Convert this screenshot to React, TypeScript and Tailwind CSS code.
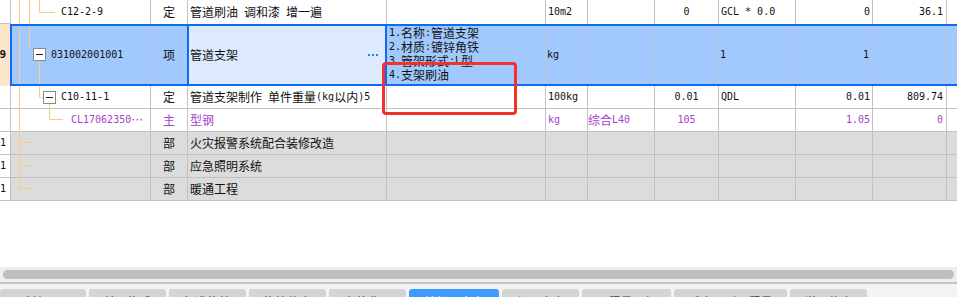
import React from 'react';

const CJK = /([\u2026\u3000-\u303f\u4e00-\u9fff\uff00-\uffef]+)/;

// SimSun-like look: full-width CJK at 12px, half-width latin at 6px per char
const T: React.FC<{ s: string }> = ({ s }) => {
  const parts = s.split(CJK).filter(Boolean);
  return (
    <>
      {parts.map((p, i) =>
        CJK.test(p) ? (
          <span key={i} className="font-['Noto_Sans_CJK_SC',sans-serif] text-[12px] leading-[14px]">
            {p}
          </span>
        ) : (
          <span key={i} className="font-['DejaVu_Sans_Mono',monospace] text-[10px] leading-[14px] whitespace-pre">
            {p}
          </span>
        )
      )}
    </>
  );
};

const grid = 'border-r border-[#c2c2c2]';
const purple = 'text-[#a741c9]';

interface RowData {
  no?: string;
  code: string;
  codePad: string;
  type: string;
  name: string;
  feature?: string;
  unit?: string;
  expr?: string;
  qty?: string;
  formula?: string;
  amount?: string;
  price?: string;
  gray?: boolean;
  main?: boolean;
}

const Row: React.FC<{ r: RowData; h: string }> = ({ r, h }) => {
  const bg = r.gray ? 'bg-[#dcdcdc]' : 'bg-white';
  const tc = r.main ? purple : 'text-[#111]';
  return (
    <div className={`flex ${h} ${tc} leading-[14px]`}>
      <div className={`w-[11px] ${grid} bg-white flex items-center justify-end pr-[4px] overflow-hidden border-b border-b-[#c2c2c2]`}>
        {r.no && <T s={r.no} />}
      </div>
      <div className={`flex flex-1 ${bg} ${h === 'h-[24px]' ? '' : 'border-b border-[#c2c2c2]'}`}>
        <div className={`w-[140px] ${grid} flex items-center ${r.codePad} whitespace-nowrap`}>
          <T s={r.code} />
        </div>
        <div className={`w-[37px] ${grid} flex items-center justify-center`}>
          <T s={r.type} />
        </div>
        <div className={`w-[199px] ${grid} flex items-center pl-[2px] whitespace-nowrap`}>
          <T s={r.name} />
        </div>
        <div className={`w-[159px] ${grid} flex items-center pl-[2px]`}>
          {r.feature && <T s={r.feature} />}
        </div>
        <div className={`w-[42px] ${grid} flex items-center pl-[2px]`}>
          {r.unit && <T s={r.unit} />}
        </div>
        <div className={`w-[67px] ${grid} flex items-center whitespace-nowrap`}>
          {r.expr && <T s={r.expr} />}
        </div>
        <div className={`w-[64px] ${grid} flex items-center justify-center`}>
          {r.qty && <T s={r.qty} />}
        </div>
        <div className={`w-[77px] ${grid} flex items-center pl-[2px] whitespace-nowrap`}>
          {r.formula && <T s={r.formula} />}
        </div>
        <div className={`w-[77px] ${grid} flex items-center justify-end pr-[2px]`}>
          {r.amount && <T s={r.amount} />}
        </div>
        <div className={`w-[74px] ${grid} flex items-center justify-end pr-[3px]`}>
          {r.price && <T s={r.price} />}
        </div>
        <div className="flex-1" />
      </div>
    </div>
  );
};

const selGrid = 'border-r border-[#b9c6da]';

const features = ['1.名称:管道支架', '2.材质:镀锌角铁', '3.管架形式:L型', '4.支架刷油'];

const SelectedRow: React.FC = () => (
  <div className="flex h-[62px] text-[#111] leading-[14px]">
    <div className="w-[10px] bg-[#fde5c8] flex items-center justify-end pr-[4px] overflow-hidden font-bold">
      <span className="font-['DejaVu_Sans_Mono',monospace] text-[11px] font-bold">9</span>
    </div>
    <div className="flex flex-1 border-y-2 border-l-2 border-[#0d6cf2] bg-[#a1c9fd]">
      <div className={`w-[139px] ${selGrid} flex items-center pl-[39px]`}>
        <T s="031002001001" />
      </div>
      <div className="w-[36px] flex items-center justify-center">
        <T s="项" />
      </div>
      <div className="w-[200px] border-x-2 border-[#0d6cf2] bg-[#dde9fd] flex items-center justify-between pl-[1px] pr-[6px]">
        <T s="管道支架" />
        <svg width="11" height="3" viewBox="0 0 11 3" className="mt-[1px]">
          <rect x="0" y="0" width="2" height="2" fill="#3a7bd5" />
          <rect x="4" y="0" width="2" height="2" fill="#3a7bd5" />
          <rect x="8" y="0" width="2" height="2" fill="#3a7bd5" />
        </svg>
      </div>
      <div className={`w-[158px] ${selGrid} pl-[2px] flex flex-col`}>
        {features.map((f) => (
          <div key={f} className="h-[14px] shrink-0 flex items-center whitespace-nowrap">
            <T s={f} />
          </div>
        ))}
      </div>
      <div className={`w-[42px] ${selGrid} flex items-center pl-[2px]`}>
        <T s="kg" />
      </div>
      <div className={`w-[67px] ${selGrid}`} />
      <div className={`w-[64px] ${selGrid}`} />
      <div className={`w-[77px] ${selGrid} flex items-center pl-[2px]`}>
        <T s="1" />
      </div>
      <div className={`w-[77px] ${selGrid} flex items-center justify-end pr-[2px]`}>
        <T s="1" />
      </div>
      <div className={`w-[74px] ${selGrid}`} />
      <div className="flex-1" />
    </div>
  </div>
);

const TreeLines: React.FC = () => {
  const c = '#fcc98a';
  return (
    <svg className="absolute top-0 left-0 pointer-events-none" width="160" height="201">
      <g stroke={c} strokeWidth="1" fill="none">
        <path d="M19.5 0V23.5M19.5 26.5V83.5M19.5 86.5V188.5" />
        <path d="M19.5 142.5H36M19.5 165.5H36M19.5 188.5H36" />
        <path d="M29.5 0V23.5M29.5 26.5V48" />
        <path d="M39.5 0V12.5H55" />
        <path d="M39.5 61V83.5M39.5 86.5V97.5H43.5" />
        <path d="M49.5 103.5V119.5H63" />
      </g>
      <rect x="33.5" y="48.5" width="12" height="12" fill="#fff" stroke="#8a8a8a" />
      <path d="M36 54.5H43" stroke="#222" strokeWidth="1" />
      <rect x="43.5" y="91.5" width="12" height="12" fill="#fff" stroke="#8a8a8a" />
      <path d="M46 97.5H53" stroke="#222" strokeWidth="1" />
    </svg>
  );
};

const tabs: { label: string; w: string; active?: boolean }[] = [
  { label: '工料机显示', w: 'w-[86px]' },
  { label: '单价构成', w: 'w-[77px]' },
  { label: '标准换算', w: 'w-[77px]' },
  { label: '换算信息', w: 'w-[77px]' },
  { label: '安装费用', w: 'w-[77px]' },
  { label: '特征及内容', w: 'w-[90px]', active: true },
  { label: '组价方案', w: 'w-[77px]' },
  { label: '工程量明细', w: 'w-[89px]' },
  { label: '反查图形工程量', w: 'w-[113px]' },
  { label: '说明信息', w: 'w-[77px]' },
];

export default function App() {
  const rows: RowData[] = [
    { code: 'C10-11-1', codePad: 'pl-[50px]', type: '定', name: '管道支架制作 单件重量(kg以内)5', unit: '100kg', qty: '0.01', formula: 'QDL', amount: '0.01', price: '809.74' },
    { code: 'CL17062350…', codePad: 'pl-[60px]', type: '主', name: '型钢', unit: 'kg', expr: '综合L40', qty: '105', amount: '1.05', price: '0', main: true },
    { no: '1', code: '', codePad: '', type: '部', name: '火灾报警系统配合装修改造', gray: true },
    { no: '1', code: '', codePad: '', type: '部', name: '应急照明系统', gray: true },
    { no: '1', code: '', codePad: '', type: '部', name: '暖通工程', gray: true },
  ];

  return (
    <div className="relative w-[957px] h-[297px] overflow-hidden bg-white flex flex-col">
      <div className="relative">
        <Row
          h="h-[24px]"
          r={{ code: 'C12-2-9', codePad: 'pl-[50px]', type: '定', name: '管道刷油 调和漆 增一遍', unit: '10m2', qty: '0', formula: 'GCL * 0.0', amount: '0', price: '36.1' }}
        />
        <SelectedRow />
        {rows.map((r, i) => (
          <Row key={i} r={r} h="h-[23px]" />
        ))}
        <TreeLines />
      </div>

      <div className="h-[66px] shrink-0" />

      {/* horizontal scrollbar */}
      <div className="h-[15px] shrink-0 bg-[#eeeeee] flex items-center px-[3px]">
        <div className="h-[9px] w-full rounded-full bg-[#bebebe]" />
      </div>
      <div className="h-[2px] shrink-0 bg-[#c4c4c4]" />

      {/* bottom tabs */}
      <div className="flex-1 bg-[#f3f3f3] pt-[5px] flex gap-[3px]">
        {tabs.map((t) => (
          <div
            key={t.label}
            className={`${t.w} h-[22px] shrink-0 rounded-t-[3px] pt-[4px] text-center leading-[16px] ${
              t.active ? 'bg-[#3f9cff] text-white' : 'bg-[#d4d4d4] text-[#333]'
            }`}
          >
            <span className="font-['Noto_Sans_CJK_SC',sans-serif] text-[12px]">{t.label}</span>
          </div>
        ))}
      </div>

      {/* red annotation box */}
      <div className="absolute left-[382px] top-[62px] w-[135px] h-[53px] border-[3px] border-[#f4302c] rounded-[4px] pointer-events-none" />
    </div>
  );
}
